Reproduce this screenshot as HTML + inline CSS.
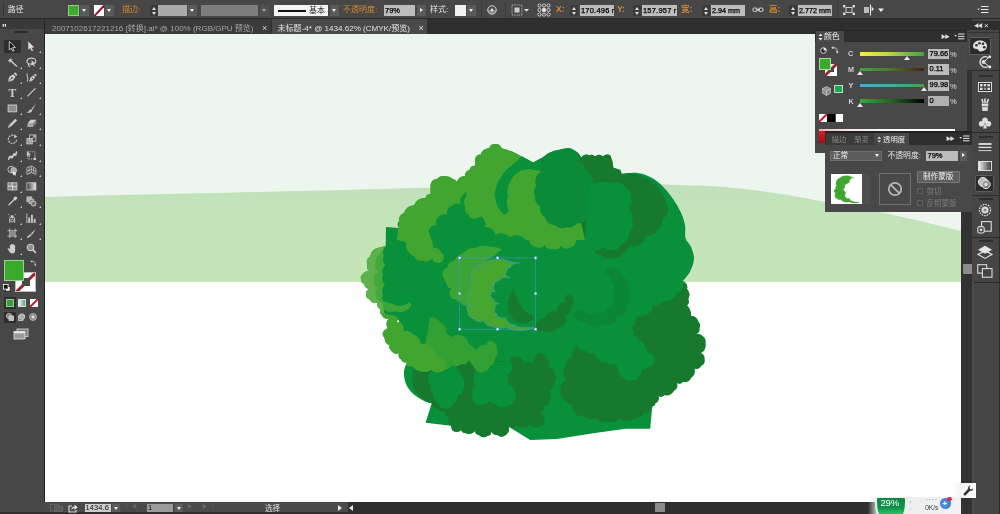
<!DOCTYPE html>
<html lang="zh-CN">
<head>
<meta charset="utf-8">
<title>Illustrator</title>
<style>
html,body{margin:0;padding:0;}
body{width:1000px;height:514px;overflow:hidden;position:relative;background:#454545;font-family:"Liberation Sans","Noto Sans CJK SC",sans-serif;font-size:8px;color:#d8d8d8;line-height:1;}
.a{position:absolute;}
.t{position:absolute;white-space:nowrap;}
#topbar{left:0;top:0;width:1000px;height:18px;background:#474747;}
#tabbar{left:0;top:18px;width:1000px;height:16px;background:#2f2f2f;}
#toolbar{left:0;top:22px;width:43.5px;height:492px;background:#474747;border-right:1.5px solid #232323;}
#canvas{left:45px;top:34px;width:916px;height:468px;background:#fff;overflow:hidden;}
#status{left:44px;top:502px;width:917px;height:12px;background:#4a4a4a;}
#vscroll{left:961px;top:34px;width:11px;height:480px;background:#323232;}
#dock{left:972px;top:19px;width:28px;height:495px;background:#454545;}
.fld{position:absolute;white-space:nowrap;overflow:hidden;background:#bdbdbd;color:#000;-webkit-text-stroke:0.25px #000;height:11px;top:5px;font-size:7.5px;line-height:11px;}
.org{color:#d98a2f;}
.dd{position:absolute;top:5px;height:11px;width:9px;background:#5a5a5a;}
.dd:after{content:"";position:absolute;left:2px;top:4px;border:2.5px solid transparent;border-top:3px solid #eee;border-bottom:0;}
.sp{position:absolute;top:5px;height:11px;width:8px;background:#3a3a3a;}
.sp:before{content:"";position:absolute;left:1.5px;top:1.5px;border:2.5px solid transparent;border-bottom:3px solid #ddd;border-top:0;}
.sp:after{content:"";position:absolute;left:1.5px;top:6.5px;border:2.5px solid transparent;border-top:3px solid #ddd;border-bottom:0;}
.grip{position:absolute;left:7px;width:14px;height:2px;background:#2e2e2e;}
.sep{position:absolute;left:0;width:28px;height:1px;background:#2c2c2c;}
.pn{position:absolute;background:#484848;}
.dim{color:#8c8c8c;}
</style>
</head>
<body>
<div id="root" class="a" style="left:0;top:0;width:1000px;height:514px;overflow:hidden;will-change:transform;">

<!-- ================= TOP CONTROL BAR ================= -->
<div id="topbar" class="a">
  <div class="a" style="left:3px;top:3px;width:1px;height:13px;background:#333;"></div>
  <div class="t" style="left:8px;top:5.5px;font-size:7.7px;color:#e6e6e6;">路径</div>
  <div class="a" style="left:68px;top:5px;width:9px;height:9px;background:#3faa2b;border:1px solid #8fd07d;"></div>
  <div class="dd" style="left:80px;"></div>
  <div class="a" style="left:94px;top:5px;width:10px;height:11px;background:#fff;overflow:hidden;"><div class="a" style="left:-3px;top:4.5px;width:16px;height:1.9px;background:#93161f;transform:rotate(-47deg);"></div></div>
  <div class="dd" style="left:105px;"></div>
  <div class="t org" style="left:122px;top:5.6px;font-size:8px;">描边:</div>
  <div class="sp" style="left:150px;"></div>
  <div class="fld" style="left:158px;width:29px;background:#a9a9a9;"></div>
  <div class="dd" style="left:188px;"></div>
  <div class="fld" style="left:201px;width:57px;background:#7d7d7d;"></div>
  <div class="dd" style="left:260px;opacity:.55;"></div>
  <div class="a" style="left:274px;top:5px;width:54px;height:11px;background:#f4f4f4;">
    <div class="a" style="left:4px;top:5px;width:28px;height:2px;background:#111;"></div>
    <div class="t" style="left:35px;top:1.5px;font-size:8px;color:#222;">基本</div>
  </div>
  <div class="dd" style="left:330px;"></div>
  <div class="t org" style="left:343px;top:5.6px;font-size:8px;">不透明度:</div>
  <div class="fld" style="left:384px;width:31px;padding-left:1px;box-sizing:border-box;">79%</div>
  <div class="a" style="left:417px;top:5px;width:9px;height:11px;background:#5a5a5a;"><i class="a" style="left:3px;top:3px;border:2.5px solid transparent;border-left:3.5px solid #eee;border-right:0;"></i></div>
  <div class="t" style="left:430px;top:5.6px;font-size:8px;color:#e6e6e6;">样式:</div>
  <div class="a" style="left:455px;top:5px;width:11px;height:11px;background:#f2f2f2;"></div>
  <div class="dd" style="left:467px;"></div>
  <div class="a" style="left:481px;top:2px;width:1px;height:15px;background:#3a3a3a;"></div>
  <!-- globe / recolor -->
  <svg class="a" style="left:486px;top:4px" width="12" height="12" viewBox="0 0 12 12"><circle cx="6" cy="6" r="4.3" fill="#8a8a8a" stroke="#c4c4c4" stroke-width="1"/><path d="M2.6,6 A3.4,3.4 0 0 1 9.4,6 Z" fill="#4a4a4a"/><circle cx="6" cy="6" r="1.4" fill="#ddd"/></svg>
  <div class="a" style="left:505px;top:2px;width:1px;height:15px;background:#3a3a3a;"></div>
  <!-- align icon -->
  <svg class="a" style="left:511px;top:4px" width="20" height="12" viewBox="0 0 20 12"><rect x="1" y="1" width="10" height="10" fill="none" stroke="#cfcfcf" stroke-width="0.8" stroke-dasharray="1.2 1"/><rect x="3.5" y="3.5" width="5" height="5" fill="#cfcfcf"/><path d="M13,5 L18,5 L15.5,7.8 Z" fill="#e6e6e6"/></svg>
  <!-- reference point grid -->
  <svg class="a" style="left:537px;top:3px" width="14" height="14" viewBox="0 0 14 14"><g fill="none" stroke="#dcdcdc" stroke-width="0.9"><circle cx="2.5" cy="2.5" r="1.6"/><circle cx="7" cy="2.5" r="1.6"/><circle cx="11.5" cy="2.5" r="1.6"/><circle cx="2.5" cy="7" r="1.6"/><circle cx="11.5" cy="7" r="1.6"/><circle cx="2.5" cy="11.5" r="1.6"/><circle cx="7" cy="11.5" r="1.6"/><circle cx="11.5" cy="11.5" r="1.6"/></g><rect x="5.2" y="5.2" width="3.6" height="3.6" fill="#eee"/></svg>
  <div class="t org" style="left:556px;top:5px;font-size:8.5px;font-weight:bold;">X:</div>
  <div class="sp" style="left:570px;"></div>
  <div class="fld" style="left:580px;width:34px;padding-left:1px;box-sizing:border-box;letter-spacing:0.2px;">170.496 r</div>
  <div class="t org" style="left:617px;top:5px;font-size:8.5px;font-weight:bold;">Y:</div>
  <div class="sp" style="left:633px;"></div>
  <div class="fld" style="left:642px;width:35px;padding-left:1px;box-sizing:border-box;letter-spacing:0.2px;">157.957 r</div>
  <div class="t org" style="left:681px;top:5.4px;font-size:8.5px;font-weight:bold;">宽:</div>
  <div class="sp" style="left:702px;"></div>
  <div class="fld" style="left:711px;width:34px;padding-left:1px;box-sizing:border-box;font-size:7.2px;">2.94 mm</div>
  <svg class="a" style="left:752px;top:5px" width="12" height="10" viewBox="0 0 12 10"><g fill="none" stroke="#ddd" stroke-width="1"><rect x="0.8" y="3" width="4.6" height="3.4" rx="1.6"/><rect x="6.6" y="3" width="4.6" height="3.4" rx="1.6"/></g><path d="M4,4.7 L8,4.7" stroke="#ddd" stroke-width="1"/></svg>
  <div class="t org" style="left:769px;top:5.4px;font-size:8.5px;font-weight:bold;">高:</div>
  <div class="sp" style="left:789px;"></div>
  <div class="fld" style="left:798px;width:34px;padding-left:1px;box-sizing:border-box;font-size:7.2px;">2.772 mm</div>
  <div class="a" style="left:837px;top:2px;width:1px;height:15px;background:#3a3a3a;"></div>
  <svg class="a" style="left:842px;top:4px" width="14" height="12" viewBox="0 0 14 12"><rect x="4" y="3.5" width="6" height="5" fill="none" stroke="#ddd" stroke-width="0.9"/><g fill="#ddd"><rect x="1" y="1" width="2.4" height="2.4"/><rect x="10.6" y="1" width="2.4" height="2.4"/><rect x="1" y="8.6" width="2.4" height="2.4"/><rect x="10.6" y="8.6" width="2.4" height="2.4"/></g></svg>
  <svg class="a" style="left:863px;top:4px" width="24" height="12" viewBox="0 0 24 12"><rect x="1" y="3" width="5" height="6" fill="#bbb"/><path d="M7.5,0.5 L7.5,11.5" stroke="#eee" stroke-width="1"/><path d="M8.6,2.5 L11,5 L8.6,7.5 Z" fill="#ddd"/><path d="M15,4.6 L21,4.6 L18,8 Z" fill="#eee"/></svg>
  <svg class="a" style="left:977px;top:5px" width="12" height="10" viewBox="0 0 12 10"><path d="M0.5,3.6 L2.8,3.6 L1.65,5.2 Z" fill="#e8e8e8"/><path d="M4,1.5 L11.5,1.5 M4,4.5 L11.5,4.5 M4,7.5 L11.5,7.5" stroke="#e8e8e8" stroke-width="1.1"/></svg>
</div>

<!-- ================= TAB BAR ================= -->
<div id="tabbar" class="a">
  
  <div class="a" style="left:0;top:0;width:1000px;height:1px;background:#2a2a2a;"></div>
  <div class="a" style="left:45px;top:1px;width:226px;height:15px;background:#3b3b3b;"></div>
  <div class="t dim" style="left:52px;top:6.5px;font-size:8.03px;color:#a6a6a6;">2007102617221216 [转换].ai* @ 100% (RGB/GPU 预览)</div>
  <div class="t" style="left:262px;top:5.5px;font-size:9px;color:#cfcfcf;">×</div>
  <div class="a" style="left:271.5px;top:1px;width:155px;height:15px;background:#4a4a4a;"></div>
  <div class="t" style="left:277.5px;top:6.5px;font-size:8.05px;color:#e2e2e2;">未标题-4* @ 1434.62% (CMYK/预览)</div>
  <div class="t" style="left:418.5px;top:5.5px;font-size:9px;color:#e2e2e2;">×</div>
</div>

<!-- ================= CANVAS ================= -->
<div id="canvas" class="a"><svg class="a" style="left:0;top:0" width="916" height="466" viewBox="45 34 916 466">
<rect x="45" y="34" width="916" height="466" fill="#ecf5ee"/>
<defs><linearGradient id="hg" x1="0" y1="183" x2="0" y2="282" gradientUnits="userSpaceOnUse"><stop offset="0" stop-color="#c1e1bb"/><stop offset="1" stop-color="#c6e6b7"/></linearGradient></defs>
<path d="M45.0,197.0 C70.8,196.4 144.2,194.6 200.0,193.3 C255.8,192.0 326.7,190.4 380.0,189.0 C433.3,187.6 483.3,185.6 520.0,184.6 C556.7,183.6 576.2,183.2 600.0,183.2 C623.8,183.2 641.7,183.8 663.0,184.5 C684.3,185.2 708.7,185.6 728.0,187.2 C747.3,188.8 763.2,191.4 779.0,193.8 C794.8,196.2 802.8,197.7 823.0,201.5 C843.2,205.3 877.0,211.6 900.0,216.5 C923.0,221.4 950.8,228.6 961.0,231.0 L961,282 L45,282 Z" fill="url(#hg)"/>
<rect x="45" y="282" width="916" height="218" fill="#ffffff"/>
<clipPath id="sil"><path d="M385.7,246.0L386.0,227.0L399.0,228.0A5.5,5.5 0 0 1 399.0,221.0A7.4,7.4 0 0 1 404.0,213.0A9.8,9.8 0 0 1 414.0,205.5A10.7,10.7 0 0 1 425.5,198.0A5.1,5.1 0 0 1 430.6,194.0L430.6,185.0A6.8,6.8 0 0 1 437.0,179.0A8.7,8.7 0 0 1 443.0,176.0A13.6,13.6 0 0 1 453.0,179.0A6.5,6.5 0 0 1 457.0,182.0A7.8,7.8 0 0 1 465.0,176.0A5.9,5.9 0 0 1 469.5,170.0A5.4,5.4 0 0 1 475.0,165.7L475.0,159.5A6.1,6.1 0 0 1 481.0,154.4A8.0,8.0 0 0 1 489.3,148.3A5.1,5.1 0 0 1 494.4,144.2A6.5,6.5 0 0 1 501.6,148.3C503.7,149.0 510.5,151.0 513.9,152.4C517.3,153.8 518.8,154.8 522.0,156.5C525.2,158.2 531.4,161.6 533.3,162.6L542.5,157.5C543.6,156.8 546.6,154.2 549.0,153.0C551.4,151.8 553.5,151.1 556.8,150.3C560.1,149.5 565.6,148.0 569.0,148.3C572.4,148.7 575.2,150.9 577.3,152.4C579.3,153.9 580.6,156.7 581.3,157.5A6.6,6.6 0 0 1 589.5,155.4A4.4,4.4 0 0 1 595.0,156.5A6.2,6.2 0 0 1 603.0,156.5A5.8,5.8 0 0 1 610.3,155.4L612.4,161.6L613.4,167.7L620.5,169.8L621.6,173.9C624.0,173.7 631.6,172.5 636.0,172.8C640.4,173.2 643.9,174.1 648.0,176.0C652.1,177.9 656.3,180.3 660.4,184.0C664.5,187.7 669.3,193.6 672.7,198.4C676.1,203.2 679.0,208.3 681.0,212.7C683.0,217.1 684.2,220.8 685.0,225.0C685.8,229.2 684.5,234.3 685.5,238.0C686.5,241.7 689.6,243.6 691.0,247.0C692.4,250.4 694.1,254.4 694.0,258.4C693.9,262.3 692.3,266.9 690.5,270.7C688.7,274.5 684.2,279.3 683.0,281.0A7.0,7.0 0 0 1 687.0,289.0A8.1,8.1 0 0 1 688.0,299.3A4.8,4.8 0 0 1 687.0,305.4A14.4,14.4 0 0 1 691.0,315.7A7.4,7.4 0 0 1 698.3,321.8A4.9,4.9 0 0 1 699.3,328.0A5.3,5.3 0 0 1 696.2,334.0A8.7,8.7 0 0 1 705.4,340.2L705.4,345.0A7.4,7.4 0 0 1 700.3,353.0A5.9,5.9 0 0 1 704.4,359.3A5.3,5.3 0 0 1 701.3,365.4A6.0,6.0 0 0 1 694.2,368.5A7.6,7.6 0 0 1 691.0,377.7A7.0,7.0 0 0 1 683.0,381.8A4.9,4.9 0 0 1 676.8,382.8A6.8,6.8 0 0 1 673.7,391.0A7.8,7.8 0 0 1 664.5,395.0A4.8,4.8 0 0 1 658.4,396.0A6.2,6.2 0 0 1 655.3,403.3A3.3,3.3 0 0 1 652.3,406.3L650.2,428.8L625.7,428.8L595.0,433.0L556.8,439.0L530.2,440.0L508.7,426.8A6.8,6.8 0 0 1 505.7,435.0A6.4,6.4 0 0 1 497.5,435.0A5.7,5.7 0 0 1 491.4,431.0A5.0,5.0 0 0 1 487.3,436.0A6.5,6.5 0 0 1 479.0,435.0A4.4,4.4 0 0 1 475.0,431.0A7.6,7.6 0 0 1 465.4,433.0A4.0,4.0 0 0 1 461.3,430.0A7.3,7.3 0 0 1 452.0,430.0L451.0,425.8L425.6,422.7L431.7,403.3C430.5,402.9 427.6,402.8 424.5,401.2C421.4,399.6 416.4,396.9 413.3,394.0C410.2,391.1 407.6,387.6 406.0,383.9C404.4,380.2 403.8,375.2 404.0,371.6C404.2,368.0 406.5,363.9 407.0,362.4A5.3,5.3 0 0 1 401.0,359.3A5.0,5.0 0 0 1 399.0,353.2A6.9,6.9 0 0 1 390.8,350.0A4.0,4.0 0 0 1 389.8,345.0A6.8,6.8 0 0 1 384.7,338.0A5.5,5.5 0 0 1 383.6,331.0L387.7,328.0A7.3,7.3 0 0 1 388.7,318.7A6.4,6.4 0 0 1 381.6,314.6A4.1,4.1 0 0 1 380.6,309.5A6.0,6.0 0 0 1 377.5,302.4A6.8,6.8 0 0 1 369.3,299.3A4.7,4.7 0 0 1 366.2,294.2A4.7,4.7 0 0 1 369.3,289.0A5.6,5.6 0 0 1 364.2,284.0A4.7,4.7 0 0 1 361.0,278.9A3.3,3.3 0 0 1 362.2,274.8A6.8,6.8 0 0 1 370.3,271.7A6.1,6.1 0 0 1 367.3,264.5A6.7,6.7 0 0 1 370.3,256.4A8.6,8.6 0 0 1 377.5,248.0L385.7,246.0Z"/></clipPath>
<g clip-path="url(#sil)">
<rect x="350" y="130" width="370" height="320" fill="#08903a"/>
<path d="M386.0,244.0A7.3,7.3 0 0 0 377.5,248.0A8.6,8.6 0 0 0 370.3,256.4A6.7,6.7 0 0 0 367.3,264.5A6.1,6.1 0 0 0 370.3,271.7A6.8,6.8 0 0 0 362.2,274.8A3.3,3.3 0 0 0 361.0,278.9A4.7,4.7 0 0 0 364.2,284.0A5.6,5.6 0 0 0 369.3,289.0A4.7,4.7 0 0 0 366.2,294.2A4.7,4.7 0 0 0 369.3,299.3A6.8,6.8 0 0 0 377.5,302.4A6.0,6.0 0 0 0 380.6,309.5A5.1,5.1 0 0 0 381.6,316.0L386.0,316.0L386.0,244.0Z" fill="#5fb24b"/>
<path d="M386.0,250.0A5.6,5.6 0 0 0 380.0,254.0A7.0,7.0 0 0 0 376.0,262.0A8.0,8.0 0 0 0 378.0,272.0A7.0,7.0 0 0 0 374.0,280.0A7.0,7.0 0 0 0 378.0,288.0A6.4,6.4 0 0 0 376.0,296.0A6.6,6.6 0 0 0 382.0,302.0L386.0,306.0L386.0,250.0Z" fill="#45a83a"/>
<path d="M390.0,244.0L386.0,246.0A8.0,8.0 0 0 0 383.8,256.0A7.1,7.1 0 0 0 385.5,265.0A8.0,8.0 0 0 0 383.0,275.0A8.0,8.0 0 0 0 385.0,285.0A7.9,7.9 0 0 0 383.2,295.0A7.9,7.9 0 0 0 385.0,305.0A7.8,7.8 0 0 0 386.0,315.0L390.0,315.0L390.0,244.0Z" fill="#08903a"/>
<path d="M381.6,299.3A14.3,14.3 0 0 0 391.8,303.4A13.5,13.5 0 0 0 402.0,305.4A11.9,11.9 0 0 0 410.2,301.3L411.2,305.4A9.5,9.5 0 0 1 406.0,310.5A13.1,13.1 0 0 1 396.0,311.6A16.3,16.3 0 0 1 383.6,309.5L381.6,299.3Z" fill="#3da536"/>
<path d="M392.0,245.0L392.0,200.0L425.0,170.0L465.0,150.0L492.0,136.0L526.0,150.0L523.0,157.0L560.0,160.0L590.0,200.0L590.0,240.0L576.0,240.0A8.3,8.3 0 0 1 569.0,248.0A6.4,6.4 0 0 1 561.0,246.0A6.9,6.9 0 0 1 552.7,249.0A7.1,7.1 0 0 1 544.5,245.0A6.6,6.6 0 0 1 536.3,247.0A7.9,7.9 0 0 1 529.0,240.0L526.0,240.0A12.9,12.9 0 0 0 509.8,237.0A11.3,11.3 0 0 0 495.4,235.0A10.2,10.2 0 0 0 485.0,227.0A8.5,8.5 0 0 0 481.0,216.8L475.0,218.8A6.0,6.0 0 0 1 468.5,214.8A6.8,6.8 0 0 1 465.4,206.6A8.1,8.1 0 0 1 466.5,196.3A5.3,5.3 0 0 1 469.5,190.2L463.4,194.3A8.1,8.1 0 0 0 461.3,204.5A8.2,8.2 0 0 0 451.0,206.6A7.1,7.1 0 0 0 447.0,214.8A6.6,6.6 0 0 0 438.8,216.8A6.6,6.6 0 0 0 436.8,225.0A7.9,7.9 0 0 0 428.6,231.0L431.7,240.0L433.7,248.2A6.5,6.5 0 0 1 441.0,252.3A6.5,6.5 0 0 1 443.0,260.4A5.1,5.1 0 0 1 436.8,262.5A4.5,4.5 0 0 1 432.7,258.4A8.1,8.1 0 0 1 422.5,260.4A7.1,7.1 0 0 1 414.3,256.4A13.0,13.0 0 0 1 406.0,242.0L397.0,240.0L399.0,221.0L392.0,215.0L392.0,245.0Z" fill="#42a52f"/>
<path d="M522.0,156.0L546.0,158.0L546.0,172.0L534.0,170.0A11.7,11.7 0 0 0 525.0,170.0A12.8,12.8 0 0 0 516.0,174.0A10.2,10.2 0 0 0 511.0,180.0A21.2,21.2 0 0 0 508.0,196.0A19.5,19.5 0 0 0 509.0,211.0L504.0,215.0L497.5,207.0L494.4,194.0L497.5,182.0L506.0,170.0L516.0,162.0L522.0,156.0Z" fill="#08903a"/>
<path d="M576.0,150.0L615.0,150.0L615.0,168.0L623.0,172.0C624.8,172.2 630.3,172.6 634.0,173.5C637.7,174.4 641.5,175.6 645.0,177.5C648.5,179.4 652.0,182.1 655.0,185.0C658.0,187.9 661.0,191.8 663.0,195.0C665.0,198.2 666.2,201.7 667.0,204.0C667.8,206.3 667.8,208.2 668.0,209.0A9.1,9.1 0 0 1 662.0,219.0A9.4,9.4 0 0 1 657.0,230.0A10.5,10.5 0 0 1 645.0,236.0A7.4,7.4 0 0 1 640.0,244.0A8.6,8.6 0 0 1 629.0,245.0A7.8,7.8 0 0 1 623.0,253.0A8.7,8.7 0 0 1 613.0,258.0A9.6,9.6 0 0 1 601.0,255.0A8.3,8.3 0 0 1 593.0,248.0L585.0,240.0L576.0,200.0L576.0,150.0Z" fill="#17792e"/>
<path d="M542.0,158.0L548.0,140.0L580.0,140.0L583.0,157.0L576.0,161.0A10.4,10.4 0 0 1 585.4,170.5A11.4,11.4 0 0 1 593.0,183.0A11.2,11.2 0 0 1 590.0,197.0A11.2,11.2 0 0 1 587.0,211.0A11.0,11.0 0 0 1 588.5,225.0L586.5,218.8A7.9,7.9 0 0 1 577.3,223.0A8.6,8.6 0 0 1 567.0,227.0A9.6,9.6 0 0 1 554.8,225.0A10.3,10.3 0 0 1 544.5,216.8A8.6,8.6 0 0 1 540.4,206.6A9.0,9.0 0 0 1 535.3,196.3A8.1,8.1 0 0 1 536.3,186.0A11.5,11.5 0 0 1 540.4,171.8L542.0,158.0Z" fill="#0b8b38"/>
<path d="M590.0,184.0A26.0,26.0 0 0 1 610.0,183.0A13.1,13.1 0 0 1 626.0,188.0A8.0,8.0 0 0 1 631.0,197.0A8.9,8.9 0 0 1 628.0,208.0A9.9,9.9 0 0 1 632.0,220.0A10.4,10.4 0 0 1 629.0,233.0A10.6,10.6 0 0 1 621.0,244.0A7.8,7.8 0 0 1 613.0,250.0A8.1,8.1 0 0 1 603.0,247.0A6.7,6.7 0 0 1 595.0,250.0L585.0,240.0L587.0,211.0L590.0,184.0Z" fill="#08903a"/>
<path d="M608.0,267.5A12.8,12.8 0 0 1 622.0,276.0A12.0,12.0 0 0 1 628.5,290.0A11.7,11.7 0 0 1 627.5,305.0A12.5,12.5 0 0 1 617.8,317.8A12.7,12.7 0 0 1 602.8,324.2A13.4,13.4 0 0 1 585.7,322.0A12.5,12.5 0 0 1 572.8,312.4L581.4,309.2A12.2,12.2 0 0 0 596.4,313.5A10.5,10.5 0 0 0 608.2,307.0A10.8,10.8 0 0 0 613.5,294.2A10.1,10.1 0 0 0 611.4,281.4A8.8,8.8 0 0 0 604.0,272.8L608.0,267.5Z" fill="#0b8637"/>
<path d="M683.0,284.0A8.4,8.4 0 0 1 677.0,293.0A12.9,12.9 0 0 1 662.5,301.0A8.8,8.8 0 0 1 652.0,305.0A5.4,5.4 0 0 1 650.0,311.6A5.2,5.2 0 0 1 644.0,314.6A6.3,6.3 0 0 1 636.0,315.7A5.0,5.0 0 0 1 635.0,322.0A5.6,5.6 0 0 1 631.0,328.0A6.4,6.4 0 0 1 633.0,336.0A5.6,5.6 0 0 1 639.0,340.0A5.5,5.5 0 0 1 644.0,345.0A6.4,6.4 0 0 1 646.0,353.0A5.7,5.7 0 0 1 653.0,355.0A4.7,4.7 0 0 1 654.0,361.0A6.9,6.9 0 0 1 648.0,367.5A5.7,5.7 0 0 1 641.0,369.5A5.1,5.1 0 0 1 639.0,375.7A6.4,6.4 0 0 1 632.0,380.0A6.8,6.8 0 0 1 623.6,377.7A7.5,7.5 0 0 1 618.5,369.5A4.8,4.8 0 0 1 617.5,363.4A8.2,8.2 0 0 1 607.0,362.4A6.7,6.7 0 0 1 599.0,359.3A5.8,5.8 0 0 1 595.0,353.0A7.2,7.2 0 0 1 586.0,351.0A8.4,8.4 0 0 1 577.0,345.0A9.9,9.9 0 0 0 573.0,357.0A10.3,10.3 0 0 0 565.0,367.5A9.8,9.8 0 0 0 566.0,380.0A8.7,8.7 0 0 0 561.0,390.0A6.4,6.4 0 0 0 563.0,398.0A9.1,9.1 0 0 0 573.0,404.0A6.8,6.8 0 0 0 575.0,412.5A6.7,6.7 0 0 0 583.0,415.6A9.5,9.5 0 0 0 595.0,418.0A9.6,9.6 0 0 0 607.0,420.7A9.9,9.9 0 0 0 619.5,418.6A12.9,12.9 0 0 0 636.0,417.6A7.4,7.4 0 0 0 644.0,412.5A6.5,6.5 0 0 0 651.0,408.0L720.0,400.0L720.0,284.0L683.0,284.0Z" fill="#17792e"/>
<path d="M413.0,371.0L430.0,362.0L480.0,360.0L509.8,361.4A6.3,6.3 0 0 1 516.0,356.2A8.4,8.4 0 0 1 524.0,363.4A8.1,8.1 0 0 1 534.3,364.4A7.3,7.3 0 0 1 536.3,355.2A5.1,5.1 0 0 1 542.5,353.2A5.7,5.7 0 0 1 546.6,359.3A6.6,6.6 0 0 1 548.6,367.5A6.8,6.8 0 0 1 554.8,373.6A8.1,8.1 0 0 1 553.7,383.9A6.2,6.2 0 0 1 548.6,390.0A8.0,8.0 0 0 1 549.6,400.2A6.2,6.2 0 0 1 544.5,406.3A5.8,5.8 0 0 1 540.4,412.5A8.6,8.6 0 0 1 544.5,422.7L542.5,425.8A9.6,9.6 0 0 1 530.2,424.8A11.1,11.1 0 0 1 516.0,425.8A5.7,5.7 0 0 1 508.7,426.8L505.0,445.0L452.0,445.0L451.0,425.8A7.3,7.3 0 0 1 449.0,416.6A5.8,5.8 0 0 1 445.0,410.4A6.6,6.6 0 0 1 436.8,408.4A5.6,5.6 0 0 1 431.7,403.3A10.8,10.8 0 0 1 424.5,399.2A14.2,14.2 0 0 1 416.3,392.0A14.2,14.2 0 0 1 412.3,381.8L413.0,371.0Z" fill="#17792e"/>
<path d="M430.6,371.6A11.2,11.2 0 0 0 431.0,386.0A6.6,6.6 0 0 0 433.7,394.0A9.0,9.0 0 0 0 438.8,404.3A7.2,7.2 0 0 0 447.0,408.4A5.7,5.7 0 0 0 453.0,404.3A7.2,7.2 0 0 0 457.0,396.0A8.0,8.0 0 0 0 463.4,388.0A8.1,8.1 0 0 0 462.4,377.7A6.4,6.4 0 0 0 457.0,371.6L457.0,362.0L431.0,362.0L430.6,371.6Z" fill="#08903a"/>
<path d="M478.0,362.0L509.8,361.4A8.0,8.0 0 0 1 510.8,371.6A5.1,5.1 0 0 1 505.7,375.7A6.6,6.6 0 0 1 507.7,383.9A8.5,8.5 0 0 1 514.9,392.0A6.4,6.4 0 0 1 513.9,400.2A8.0,8.0 0 0 1 505.7,406.3A8.2,8.2 0 0 1 495.4,404.3A5.1,5.1 0 0 1 490.3,400.2A6.4,6.4 0 0 1 483.0,404.0A5.5,5.5 0 0 1 476.0,404.0A7.4,7.4 0 0 1 473.0,395.0A8.1,8.1 0 0 1 476.0,385.0A8.0,8.0 0 0 1 474.0,375.0A6.3,6.3 0 0 1 478.0,368.0L478.0,362.0Z" fill="#08903a"/>
<path d="M430.0,318.0A8.4,8.4 0 0 1 440.0,322.0A9.8,9.8 0 0 1 446.0,333.0L452.0,337.0A7.8,7.8 0 0 1 462.0,336.0A7.2,7.2 0 0 1 468.0,343.0L477.0,350.0A8.0,8.0 0 0 1 486.0,345.0A5.6,5.6 0 0 1 492.0,341.0A8.0,8.0 0 0 1 497.0,350.0A6.4,6.4 0 0 1 495.0,358.0A7.4,7.4 0 0 1 490.0,366.0A7.2,7.2 0 0 1 483.0,372.0A6.7,6.7 0 0 1 475.0,369.0L469.0,360.0A7.0,7.0 0 0 1 461.0,364.0A7.8,7.8 0 0 1 451.0,365.0A5.9,5.9 0 0 1 445.0,369.5A6.3,6.3 0 0 1 437.0,370.6A5.3,5.3 0 0 1 431.0,367.5A7.4,7.4 0 0 1 422.5,371.6A6.0,6.0 0 0 1 416.0,367.5L410.0,360.0L425.0,345.0L428.0,330.0L430.0,318.0Z" fill="#33a034"/>
<path d="M375.0,311.0L389.7,314.8A9.3,9.3 0 0 1 399.7,321.4A8.1,8.1 0 0 1 403.0,331.3A8.2,8.2 0 0 1 413.0,334.6A10.0,10.0 0 0 1 421.0,344.6A7.9,7.9 0 0 1 431.0,346.0A8.7,8.7 0 0 1 436.0,356.0A10.2,10.2 0 0 1 446.0,364.4A5.8,5.8 0 0 1 442.7,371.0A9.2,9.2 0 0 1 431.0,369.4A7.9,7.9 0 0 1 421.0,371.0A7.4,7.4 0 0 1 413.0,366.0A7.4,7.4 0 0 1 404.0,363.0L395.0,362.0L375.0,345.0L375.0,311.0Z" fill="#42a52f"/>
<path d="M442.5,275.7A7.9,7.9 0 0 1 447.8,267.0A7.1,7.1 0 0 1 454.3,260.7A14.7,14.7 0 0 1 462.8,253.2A18.2,18.2 0 0 1 475.7,247.8A19.5,19.5 0 0 1 490.7,246.8A15.8,15.8 0 0 1 502.4,250.0A11.8,11.8 0 0 0 495.0,255.3L484.0,262.0L484.0,320.7A8.4,8.4 0 0 1 473.5,318.5A6.6,6.6 0 0 1 468.0,312.0A5.0,5.0 0 0 1 467.0,305.7A5.9,5.9 0 0 1 460.7,301.4A4.5,4.5 0 0 1 455.3,299.2A5.3,5.3 0 0 1 450.0,295.0A5.3,5.3 0 0 1 452.0,288.5A5.2,5.2 0 0 1 446.8,284.3L442.5,275.7Z" fill="#3ba434"/>
<path d="M514.2,289.6A14.3,14.3 0 0 0 508.9,299.2A11.3,11.3 0 0 0 507.8,307.8A13.6,13.6 0 0 0 512.0,317.4A13.2,13.2 0 0 0 520.6,322.8A11.3,11.3 0 0 0 529.2,321.7A8.9,8.9 0 0 0 533.5,316.4A9.8,9.8 0 0 1 527.0,312.6A12.6,12.6 0 0 1 521.0,305.0A10.7,10.7 0 0 1 517.6,297.5A11.2,11.2 0 0 1 514.2,289.6Z" fill="#17792e"/>
<path d="M534.3,330.0A12.5,12.5 0 0 1 544.5,317.7A10.7,10.7 0 0 1 556.8,311.6A10.3,10.3 0 0 1 565.0,301.3A6.0,6.0 0 0 1 568.0,294.2A5.6,5.6 0 0 1 573.0,299.3A6.6,6.6 0 0 1 571.0,307.5A7.9,7.9 0 0 1 565.0,315.7A6.3,6.3 0 0 1 565.0,323.8A7.2,7.2 0 0 1 556.8,328.0A8.5,8.5 0 0 1 546.6,332.0L534.3,330.0Z" fill="#17792e"/>
<path d="M484.2,262.8A14.6,14.6 0 0 1 495.0,259.6A19.7,19.7 0 0 1 510.0,261.8L520.6,262.8A14.8,14.8 0 0 0 510.0,267.0A11.4,11.4 0 0 0 505.7,274.6L508.9,277.8A8.0,8.0 0 0 0 499.2,281.0A5.3,5.3 0 0 0 493.9,285.3A5.3,5.3 0 0 0 496.0,291.7A4.5,4.5 0 0 0 490.7,293.9A4.8,4.8 0 0 0 493.9,299.2A4.7,4.7 0 0 0 498.2,303.5A4.9,4.9 0 0 0 495.0,308.9A4.2,4.2 0 0 0 496.0,314.2A8.0,8.0 0 0 0 505.7,317.4A8.8,8.8 0 0 0 514.2,324.9A16.9,16.9 0 0 0 527.0,327.0L533.5,328.0A36.1,36.1 0 0 1 505.7,327.5A19.6,19.6 0 0 1 490.7,326.0A6.5,6.5 0 0 1 484.2,320.7A8.5,8.5 0 0 1 473.5,318.5A6.5,6.5 0 0 1 468.2,312.0A6.0,6.0 0 0 1 470.3,304.6A5.4,5.4 0 0 1 466.0,299.2A6.0,6.0 0 0 1 470.3,292.8A6.1,6.1 0 0 1 472.5,285.3A5.9,5.9 0 0 1 471.4,277.8A6.4,6.4 0 0 1 474.6,270.3A4.7,4.7 0 0 1 478.9,266.0L484.2,262.8Z" fill="#45a730" stroke="#4a98d6" stroke-width="0.6" stroke-opacity="0.75"/>
</g>
<rect x="459.6" y="257.9" width="76" height="71.3" fill="none" stroke="#4a98d6" stroke-width="0.6" stroke-opacity="0.9"/>
<rect x="458.4" y="256.7" width="2.4" height="2.4" fill="#fff" stroke="#3f8fd0" stroke-width="0.5"/>
<rect x="458.4" y="292.3" width="2.4" height="2.4" fill="#fff" stroke="#3f8fd0" stroke-width="0.5"/>
<rect x="458.4" y="328.0" width="2.4" height="2.4" fill="#fff" stroke="#3f8fd0" stroke-width="0.5"/>
<rect x="496.4" y="256.7" width="2.4" height="2.4" fill="#fff" stroke="#3f8fd0" stroke-width="0.5"/>
<rect x="496.4" y="328.0" width="2.4" height="2.4" fill="#fff" stroke="#3f8fd0" stroke-width="0.5"/>
<rect x="534.4" y="256.7" width="2.4" height="2.4" fill="#fff" stroke="#3f8fd0" stroke-width="0.5"/>
<rect x="534.4" y="292.3" width="2.4" height="2.4" fill="#fff" stroke="#3f8fd0" stroke-width="0.5"/>
<rect x="534.4" y="328.0" width="2.4" height="2.4" fill="#fff" stroke="#3f8fd0" stroke-width="0.5"/>
<rect x="483.4" y="262.0" width="1.6" height="1.6" fill="#4a98d6" fill-opacity="0.85"/>
<rect x="509.2" y="261.0" width="1.6" height="1.6" fill="#4a98d6" fill-opacity="0.85"/>
<rect x="509.2" y="266.2" width="1.6" height="1.6" fill="#4a98d6" fill-opacity="0.85"/>
<rect x="508.1" y="277.0" width="1.6" height="1.6" fill="#4a98d6" fill-opacity="0.85"/>
<rect x="493.1" y="284.5" width="1.6" height="1.6" fill="#4a98d6" fill-opacity="0.85"/>
<rect x="489.9" y="293.1" width="1.6" height="1.6" fill="#4a98d6" fill-opacity="0.85"/>
<rect x="497.4" y="302.7" width="1.6" height="1.6" fill="#4a98d6" fill-opacity="0.85"/>
<rect x="495.2" y="313.4" width="1.6" height="1.6" fill="#4a98d6" fill-opacity="0.85"/>
<rect x="513.4" y="324.1" width="1.6" height="1.6" fill="#4a98d6" fill-opacity="0.85"/>
<rect x="532.7" y="327.2" width="1.6" height="1.6" fill="#4a98d6" fill-opacity="0.85"/>
<rect x="489.9" y="325.2" width="1.6" height="1.6" fill="#4a98d6" fill-opacity="0.85"/>
<rect x="472.7" y="317.7" width="1.6" height="1.6" fill="#4a98d6" fill-opacity="0.85"/>
<rect x="469.5" y="303.8" width="1.6" height="1.6" fill="#4a98d6" fill-opacity="0.85"/>
<rect x="469.5" y="292.0" width="1.6" height="1.6" fill="#4a98d6" fill-opacity="0.85"/>
<rect x="470.6" y="277.0" width="1.6" height="1.6" fill="#4a98d6" fill-opacity="0.85"/>
<rect x="478.1" y="265.2" width="1.6" height="1.6" fill="#4a98d6" fill-opacity="0.85"/>
<rect x="397.2" y="320.4" width="1.8" height="1.8" fill="#f4fff4"/>
</svg></div>

<!-- ================= LEFT TOOLBAR ================= -->
<div id="toolbar" class="a">
  <div class="a" style="left:0;top:-3px;width:44px;height:10px;background:#393939;"></div>
  <div class="t" style="left:2px;top:2px;font-size:10px;font-weight:bold;color:#e8e8e8;letter-spacing:-1px;">"</div>
  <div class="a" style="left:14px;top:8.6px;width:13.5px;height:2px;background:#2c2c2c;"></div>
  <div class="a" style="left:0;top:489.5px;width:44px;height:2.5px;background:#303030;"></div>
  <div class="a" style="left:3.5px;top:17.5px;width:17px;height:13.5px;background:#2d2d2d;border-radius:1.5px;"></div>
<svg class="a" style="left:7.1px;top:19.1px" width="10.8" height="10.8" viewBox="0 0 12 12"><path d="M2.5,0.5 L2.5,10 L4.8,7.9 L6.4,11.4 L7.9,10.7 L6.2,7.3 L9.3,7.1 Z" fill="#111" stroke="#e8e8e8" stroke-width="0.9"/></svg>
<svg class="a" style="left:26.1px;top:19.1px" width="10.8" height="10.8" viewBox="0 0 12 12"><path d="M2.5,0.5 L2.5,10 L4.8,7.9 L6.4,11.4 L7.9,10.7 L6.2,7.3 L9.3,7.1 Z" fill="#e0e0e0"/></svg>
<div class="a" style="left:38.5px;top:29.0px;width:0;height:0;border-left:2px solid transparent;border-bottom:2px solid #ccc;"></div>
<svg class="a" style="left:7.1px;top:34.6px" width="10.8" height="10.8" viewBox="0 0 12 12"><path d="M4.5,4.5 L11,10.5" stroke="#cdcdcd" stroke-width="1.6"/><path d="M3.5,0.5 L4.3,2.7 L6.6,2.2 L5,3.9 L6.4,5.8 L4.2,5.1 L2.8,7 L2.7,4.6 L0.5,3.8 L2.7,3 Z" fill="#cdcdcd"/></svg>
<svg class="a" style="left:26.1px;top:34.6px" width="10.8" height="10.8" viewBox="0 0 12 12"><ellipse cx="6" cy="4.6" rx="5" ry="3.4" fill="none" stroke="#cdcdcd" stroke-width="1.3"/><path d="M3.2,7 C2,8.5 3,10 4.5,11.2" fill="none" stroke="#cdcdcd" stroke-width="1.2"/><path d="M6.2,3.2 L6.2,9.6 L7.8,8.3 L9,10.8 L10,10.3 L8.9,7.9 L10.8,7.8 Z" fill="#cdcdcd"/></svg>
<div class="a" style="left:19.5px;top:44.5px;width:0;height:0;border-left:2px solid transparent;border-bottom:2px solid #ccc;"></div>
<div class="a" style="left:38.5px;top:44.5px;width:0;height:0;border-left:2px solid transparent;border-bottom:2px solid #ccc;"></div>
<svg class="a" style="left:7.1px;top:50.3px" width="10.8" height="10.8" viewBox="0 0 12 12"><path d="M0.8,11.2 L2.6,5.4 L6.8,2.4 L9.6,5.2 L6.6,9.4 Z" fill="#cdcdcd"/><path d="M7.6,1.8 L9,0.4 L11.6,3 L10.2,4.4 Z" fill="#cdcdcd"/><path d="M0.8,11.2 L5,7" stroke="#474747" stroke-width="0.7"/><circle cx="5.4" cy="6.6" r="1" fill="#474747"/></svg>
<svg class="a" style="left:26.1px;top:50.3px" width="10.8" height="10.8" viewBox="0 0 12 12"><path d="M3.6,11 L4.8,6.4 L8,3.6 L10.2,5.8 L7.6,9.2 Z" fill="#cdcdcd"/><path d="M8.8,3 L10,1.8 L12,3.8 L10.8,5 Z" fill="#cdcdcd"/><circle cx="7.2" cy="7" r="0.8" fill="#474747"/><path d="M1.2,1.5 C0.4,5 3.2,6 1.6,10.5" fill="none" stroke="#cdcdcd" stroke-width="1.1"/></svg>
<div class="a" style="left:19.5px;top:60.2px;width:0;height:0;border-left:2px solid transparent;border-bottom:2px solid #ccc;"></div>
<div class="a" style="left:38.5px;top:60.2px;width:0;height:0;border-left:2px solid transparent;border-bottom:2px solid #ccc;"></div>
<svg class="a" style="left:7.1px;top:65.1px" width="10.8" height="10.8" viewBox="0 0 12 12"><text x="6" y="10.6" text-anchor="middle" font-family="Liberation Serif,serif" font-size="13" font-weight="bold" fill="#cdcdcd">T</text></svg>
<svg class="a" style="left:26.1px;top:65.1px" width="10.8" height="10.8" viewBox="0 0 12 12"><path d="M1.5,10.5 L10.5,1.5" stroke="#cdcdcd" stroke-width="1.3"/></svg>
<div class="a" style="left:19.5px;top:75.0px;width:0;height:0;border-left:2px solid transparent;border-bottom:2px solid #ccc;"></div>
<div class="a" style="left:38.5px;top:75.0px;width:0;height:0;border-left:2px solid transparent;border-bottom:2px solid #ccc;"></div>
<svg class="a" style="left:7.1px;top:80.6px" width="10.8" height="10.8" viewBox="0 0 12 12"><rect x="1.2" y="2.2" width="9.6" height="7.6" fill="#8e8e8e" stroke="#cdcdcd" stroke-width="1"/></svg>
<svg class="a" style="left:26.1px;top:80.6px" width="10.8" height="10.8" viewBox="0 0 12 12"><path d="M11.2,0.6 L6,6.6 L7.2,7.6 Z" fill="#cdcdcd"/><path d="M5.6,7 C3.5,7.2 3.8,9.6 1,10.6 C4,11.4 6.8,10.2 6.9,8 Z" fill="#cdcdcd"/></svg>
<div class="a" style="left:19.5px;top:90.5px;width:0;height:0;border-left:2px solid transparent;border-bottom:2px solid #ccc;"></div>
<div class="a" style="left:38.5px;top:90.5px;width:0;height:0;border-left:2px solid transparent;border-bottom:2px solid #ccc;"></div>
<svg class="a" style="left:7.1px;top:96.3px" width="10.8" height="10.8" viewBox="0 0 12 12"><path d="M9.2,0.8 L11.2,2.8 L4,10 L1,11 L2,8 Z" fill="#cdcdcd"/><path d="M2,8 L4,10" stroke="#474747" stroke-width="0.6"/></svg>
<svg class="a" style="left:26.1px;top:96.3px" width="10.8" height="10.8" viewBox="0 0 12 12"><path d="M5,2 L11.5,2 L8,6.5 L1.5,6.5 Z" fill="#cdcdcd"/><path d="M1.5,6.8 L8,6.8 L8,10 L1.5,10 Z" fill="#aaa"/><path d="M8,6.8 L11.5,2.3 L11.5,5.6 L8,10 Z" fill="#888"/></svg>
<div class="a" style="left:19.5px;top:106.2px;width:0;height:0;border-left:2px solid transparent;border-bottom:2px solid #ccc;"></div>
<div class="a" style="left:38.5px;top:106.2px;width:0;height:0;border-left:2px solid transparent;border-bottom:2px solid #ccc;"></div>
<svg class="a" style="left:7.1px;top:111.9px" width="10.8" height="10.8" viewBox="0 0 12 12"><path d="M9.8,3.2 A4.6,4.6 0 1 0 10.6,6.6" fill="none" stroke="#cdcdcd" stroke-width="1.2" stroke-dasharray="2.2 1"/><path d="M8.2,0.6 L11.4,3 L7.8,4.6 Z" fill="#cdcdcd"/></svg>
<svg class="a" style="left:26.1px;top:111.9px" width="10.8" height="10.8" viewBox="0 0 12 12"><rect x="1" y="5" width="6" height="6" fill="#999" stroke="#cdcdcd" stroke-width="0.9"/><rect x="4" y="1" width="7" height="7" fill="none" stroke="#cdcdcd" stroke-width="0.9"/><path d="M6,6 L10,2 M10,2 L7.6,2.2 M10,2 L9.8,4.4" stroke="#cdcdcd" stroke-width="0.9" fill="none"/></svg>
<div class="a" style="left:19.5px;top:121.8px;width:0;height:0;border-left:2px solid transparent;border-bottom:2px solid #ccc;"></div>
<div class="a" style="left:38.5px;top:121.8px;width:0;height:0;border-left:2px solid transparent;border-bottom:2px solid #ccc;"></div>
<svg class="a" style="left:7.1px;top:127.6px" width="10.8" height="10.8" viewBox="0 0 12 12"><path d="M1,10 C3,3 5,9 6.5,5 C8,1 10,6 11,2 L11,5 C10,8 8,5 7,8 C5.5,11.5 3,7 1,10 Z" fill="#cdcdcd"/><circle cx="2" cy="10" r="1" fill="#cdcdcd"/><circle cx="10.5" cy="2.5" r="1" fill="#cdcdcd"/></svg>
<svg class="a" style="left:26.1px;top:127.6px" width="10.8" height="10.8" viewBox="0 0 12 12"><rect x="2" y="2" width="8" height="8" fill="none" stroke="#cdcdcd" stroke-width="0.9" stroke-dasharray="1.4 1"/><path d="M1,1 L5.5,5.2 L3.6,5.4 L4.6,7.6 L3.8,8 L2.8,5.8 L1,7 Z" fill="#cdcdcd"/><rect x="8.6" y="8.6" width="2.6" height="2.6" fill="#cdcdcd"/></svg>
<div class="a" style="left:19.5px;top:137.5px;width:0;height:0;border-left:2px solid transparent;border-bottom:2px solid #ccc;"></div>
<div class="a" style="left:38.5px;top:137.5px;width:0;height:0;border-left:2px solid transparent;border-bottom:2px solid #ccc;"></div>
<svg class="a" style="left:7.1px;top:143.3px" width="10.8" height="10.8" viewBox="0 0 12 12"><circle cx="4.6" cy="5" r="3.6" fill="none" stroke="#cdcdcd" stroke-width="1"/><circle cx="7.4" cy="6" r="3.2" fill="#aaa" stroke="#cdcdcd" stroke-width="0.9"/><path d="M7,7 L7,11.6 L8.2,10.6 L9,12 L9.8,11.6 L9,10.2 L10.4,10 Z" fill="#fff"/></svg>
<svg class="a" style="left:26.1px;top:143.3px" width="10.8" height="10.8" viewBox="0 0 12 12"><path d="M1,10.5 L1,3 L6,1 L11,4 L11,10.5 M1,10.5 L6,8.5 L11,10.5 M6,1 L6,8.5 M1,6.7 L6,4.8 L11,7.2 M3.5,2 L3.5,9.5 M8.5,2.5 L8.5,9.5" fill="none" stroke="#cdcdcd" stroke-width="0.8"/></svg>
<div class="a" style="left:19.5px;top:153.2px;width:0;height:0;border-left:2px solid transparent;border-bottom:2px solid #ccc;"></div>
<div class="a" style="left:38.5px;top:153.2px;width:0;height:0;border-left:2px solid transparent;border-bottom:2px solid #ccc;"></div>
<svg class="a" style="left:7.1px;top:158.6px" width="10.8" height="10.8" viewBox="0 0 12 12"><rect x="1" y="2" width="10" height="8" fill="#888" stroke="#cdcdcd" stroke-width="0.9"/><path d="M1,6 C4,4 8,8 11,6 M6,2 C4.5,5 7.5,7 6,10" fill="none" stroke="#fff" stroke-width="0.8"/></svg>
<svg class="a" style="left:26.1px;top:158.6px" width="10.8" height="10.8" viewBox="0 0 12 12"><defs><linearGradient id="tg" x1="0" x2="1"><stop offset="0" stop-color="#3a3a3a"/><stop offset="1" stop-color="#eee"/></linearGradient></defs><rect x="1" y="2" width="10" height="8" fill="url(#tg)" stroke="#cdcdcd" stroke-width="0.9"/></svg>
<div class="a" style="left:19.5px;top:168.5px;width:0;height:0;border-left:2px solid transparent;border-bottom:2px solid #ccc;"></div>
<svg class="a" style="left:7.1px;top:174.1px" width="10.8" height="10.8" viewBox="0 0 12 12"><path d="M10.8,1.2 C11.8,2.2 11.4,3.4 10.2,4.2 L8.8,5.4 L6.6,3.2 L7.8,1.8 C8.6,0.6 9.8,0.2 10.8,1.2 Z" fill="#cdcdcd"/><path d="M7,4 L8,5 L3,10 L1,11 L2,9 Z" fill="#cdcdcd"/></svg>
<svg class="a" style="left:26.1px;top:174.1px" width="10.8" height="10.8" viewBox="0 0 12 12"><rect x="1" y="1" width="5.5" height="5.5" fill="#aaa" stroke="#cdcdcd" stroke-width="0.8"/><rect x="3.5" y="3.5" width="5" height="5" fill="#888" stroke="#cdcdcd" stroke-width="0.8"/><circle cx="8.4" cy="8.4" r="2.8" fill="#777" stroke="#cdcdcd" stroke-width="1"/></svg>
<div class="a" style="left:19.5px;top:184.0px;width:0;height:0;border-left:2px solid transparent;border-bottom:2px solid #ccc;"></div>
<div class="a" style="left:38.5px;top:184.0px;width:0;height:0;border-left:2px solid transparent;border-bottom:2px solid #ccc;"></div>
<svg class="a" style="left:7.1px;top:190.6px" width="10.8" height="10.8" viewBox="0 0 12 12"><rect x="3" y="5" width="5.5" height="6.5" rx="1" fill="none" stroke="#cdcdcd" stroke-width="1"/><rect x="4.4" y="2.6" width="2.8" height="2.4" fill="#cdcdcd"/><circle cx="5.8" cy="8.2" r="1.6" fill="none" stroke="#cdcdcd" stroke-width="0.9"/><path d="M1,1.5 L2,1.5 M2,3.5 L3,3.5 M9,1.5 L10,1.5" stroke="#cdcdcd" stroke-width="0.9"/></svg>
<svg class="a" style="left:26.1px;top:190.6px" width="10.8" height="10.8" viewBox="0 0 12 12"><path d="M1,0.5 L1,11 L11.5,11" fill="none" stroke="#cdcdcd" stroke-width="0.9"/><rect x="2.6" y="5" width="2" height="5.4" fill="#cdcdcd"/><rect x="5.6" y="2" width="2" height="8.4" fill="#cdcdcd"/><rect x="8.6" y="6.4" width="2" height="4" fill="#cdcdcd"/></svg>
<div class="a" style="left:19.5px;top:200.5px;width:0;height:0;border-left:2px solid transparent;border-bottom:2px solid #ccc;"></div>
<div class="a" style="left:38.5px;top:200.5px;width:0;height:0;border-left:2px solid transparent;border-bottom:2px solid #ccc;"></div>
<svg class="a" style="left:7.1px;top:205.6px" width="10.8" height="10.8" viewBox="0 0 12 12"><path d="M3,0.5 L3,11.5 M9,0.5 L9,11.5 M0.5,3 L11.5,3 M0.5,9 L11.5,9" stroke="#cdcdcd" stroke-width="0.9"/><rect x="3" y="3" width="6" height="6" fill="#8a8a8a"/></svg>
<svg class="a" style="left:26.1px;top:205.6px" width="10.8" height="10.8" viewBox="0 0 12 12"><path d="M11,1 L5.4,6.2 L6.8,7.6 Z" fill="#cdcdcd"/><path d="M5,6.6 L6.4,8 L2,11 L1,10 Z" fill="#cdcdcd"/></svg>
<div class="a" style="left:19.5px;top:215.5px;width:0;height:0;border-left:2px solid transparent;border-bottom:2px solid #ccc;"></div>
<div class="a" style="left:38.5px;top:215.5px;width:0;height:0;border-left:2px solid transparent;border-bottom:2px solid #ccc;"></div>
<svg class="a" style="left:7.1px;top:221.1px" width="10.8" height="10.8" viewBox="0 0 12 12"><path d="M3.2,6.8 L3.2,2.6 C3.2,1.6 4.6,1.6 4.6,2.6 L4.6,1.6 C4.6,0.5 6.1,0.5 6.1,1.6 L6.1,2 C6.1,1 7.6,1 7.6,2 L7.6,3 C7.6,2.1 9,2.1 9,3.1 L9,8 C9,10.4 8,11.6 6,11.6 C4.2,11.6 3.4,10.8 2.4,9.2 L0.8,6.6 C0.4,5.8 1.4,5.2 2,6 Z" fill="#cdcdcd"/></svg>
<svg class="a" style="left:26.1px;top:221.1px" width="10.8" height="10.8" viewBox="0 0 12 12"><circle cx="5" cy="5" r="3.6" fill="#8f8f8f" stroke="#cdcdcd" stroke-width="1.3"/><path d="M7.6,7.6 L11,11" stroke="#cdcdcd" stroke-width="2"/></svg>
<div class="a" style="left:19.5px;top:231.0px;width:0;height:0;border-left:2px solid transparent;border-bottom:2px solid #ccc;"></div>
  <!-- fill / stroke -->
  <div class="a" style="left:15px;top:249.5px;width:20.5px;height:20.5px;background:#fff;border:0.5px solid #bbb;box-sizing:border-box;overflow:hidden;"><div class="a" style="left:-5px;top:8.2px;width:30px;height:3.2px;background:#a3202a;transform:rotate(-45deg);"></div><div class="a" style="left:5.7px;top:5.7px;width:8.2px;height:8.2px;background:#474747;"></div></div>
  <div class="a" style="left:3.5px;top:238px;width:20.5px;height:20.5px;background:#3aaa2c;border:1px solid #97d58b;box-sizing:border-box;"></div>
  <svg class="a" style="left:29.5px;top:238px" width="7" height="6.3" viewBox="0 0 10 9"><path d="M2,2 C6,1.5 7.5,3 7.5,7" fill="none" stroke="#ddd" stroke-width="1"/><path d="M0.5,2 L3,0.3 L3,3.7 Z M7.5,8.8 L5.8,6.4 L9.2,6.4 Z" fill="#ddd"/></svg>
  <svg class="a" style="left:3px;top:262px" width="8" height="8" viewBox="0 0 8 8"><rect x="2.6" y="2.6" width="4.6" height="4.6" fill="#fff" stroke="#111" stroke-width="0.8"/><rect x="0.5" y="0.5" width="4.6" height="4.6" fill="#111" stroke="#fff" stroke-width="0.8"/></svg>
  <!-- colour mode buttons -->
  <div class="a" style="left:4px;top:275px;width:12px;height:12px;background:#2d2d2d;"></div>
  <div class="a" style="left:6px;top:277px;width:8px;height:8px;background:#3c9b38;border:0.5px solid #9c9;box-sizing:border-box;"></div>
  <div class="a" style="left:18px;top:277px;width:8px;height:8px;background:linear-gradient(90deg,#e8f4ee,#5ea57e);border:0.5px solid #ddd;box-sizing:border-box;"></div>
  <div class="a" style="left:29.5px;top:277px;width:8px;height:8px;background:#fff;overflow:hidden;"><div class="a" style="left:-2px;top:3px;width:12px;height:2px;background:#c0202a;transform:rotate(-45deg);"></div></div>
  <!-- draw modes -->
  <div class="a" style="left:4px;top:289.5px;width:12px;height:11px;background:#2d2d2d;"></div>
  <svg class="a" style="left:5px;top:290px" width="34" height="10" viewBox="0 0 34 10"><g fill="#bbb" stroke="#e0e0e0" stroke-width="0.7"><circle cx="4" cy="4" r="2.6" fill="#777"/><rect x="4" y="4" width="4.6" height="4.6"/><rect x="13.4" y="4" width="4.6" height="4.6" fill="#777"/><circle cx="17" cy="4.6" r="2.8" fill="#aaa"/><circle cx="28" cy="5" r="3.4" fill="#777"/><circle cx="28" cy="5" r="1.3" fill="#ddd"/></g></svg>
  <!-- screen mode -->
  <svg class="a" style="left:13px;top:306px" width="16" height="12" viewBox="0 0 16 12"><rect x="4" y="1" width="11" height="7.5" fill="#777" stroke="#ddd" stroke-width="0.8"/><rect x="1" y="3.5" width="11" height="7.5" fill="#999" stroke="#e6e6e6" stroke-width="0.8"/><rect x="1" y="3.5" width="11" height="1.8" fill="#e6e6e6"/></svg>
</div>

<!-- ================= STATUS BAR ================= -->
<div id="status" class="a">
  <div class="a" style="left:0;top:10px;width:917px;height:2px;background:#2e2e2e;"></div>
  <svg class="a" style="left:6px;top:2px" width="13" height="8" viewBox="0 0 13 8"><rect x="0.5" y="0.5" width="8" height="6.4" fill="none" stroke="#666" stroke-width="0.8"/><rect x="4.5" y="2" width="8" height="5.5" fill="#5a5a5a" stroke="#666" stroke-width="0.8"/></svg>
  <svg class="a" style="left:24px;top:1.5px" width="10" height="9" viewBox="0 0 10 9"><path d="M4,2 L1,2 L1,8 L8,8 L8,6" fill="none" stroke="#e0e0e0" stroke-width="1.1"/><path d="M3.5,6 C3.5,3.4 5,2.6 6.6,2.6 L6.6,0.6 L9.6,3.3 L6.6,6 L6.6,4.2 C5.4,4.2 4.4,4.6 3.5,6 Z" fill="#e6e6e6"/></svg>
  <div class="a" style="left:40.5px;top:2px;width:26px;height:8px;background:#cdcdcd;color:#111;font-size:7.5px;line-height:8.5px;letter-spacing:0.1px;padding-left:1px;box-sizing:border-box;">1434.6</div>
  <div class="a" style="left:68px;top:2px;width:8px;height:8px;background:#5c5c5c;"><i class="a" style="left:1.5px;top:2.5px;border:2.5px solid transparent;border-top:3px solid #f0f0f0;border-bottom:0;"></i></div>
  <div class="t" style="left:82px;top:2px;font-size:5.5px;color:#666;letter-spacing:4px;">|◀ ◀</div>
  <div class="a" style="left:103px;top:2px;width:26px;height:8px;background:#9b9b9b;color:#111;font-size:7.5px;line-height:8.5px;padding-left:1px;box-sizing:border-box;">1</div>
  <div class="a" style="left:131px;top:2px;width:8px;height:8px;background:#5c5c5c;"><i class="a" style="left:1.5px;top:2.5px;border:2.5px solid transparent;border-top:3px solid #f0f0f0;border-bottom:0;"></i></div>
  <div class="t" style="left:143px;top:2px;font-size:5.5px;color:#666;letter-spacing:4px;">▶ ▶|</div>
  <div class="t" style="left:221px;top:2.5px;font-size:7.5px;color:#e0e0e0;">选择</div>
  <div class="a" style="left:294px;top:3px;border:3px solid transparent;border-left:4px solid #e8e8e8;border-right:0;"></div>
  <div class="a" style="left:304px;top:0;width:613px;height:12px;background:#2f2f2f;"></div>
  <div class="a" style="left:305px;top:3px;border:3px solid transparent;border-right:4px solid #e8e8e8;border-left:0;"></div>
  <div class="a" style="left:611px;top:0.5px;width:10px;height:9.5px;background:#8c8c8c;"></div>
</div>

<div id="vscroll" class="a">
  <div class="a" style="left:1.5px;top:230px;width:9px;height:10px;background:#8c8c8c;"></div>
</div>

<!-- ================= RIGHT DOCK ================= -->
<div id="dock" class="a">
    <!-- dock header (positions relative to dock: left 972, top 19) -->
  <div class="a" style="left:-5px;top:2px;width:33px;height:9px;background:#2f2f2f;"></div>
  <div class="t" style="left:2px;top:4px;font-size:5px;color:#e0e0e0;letter-spacing:-1.2px;">◀◀</div>
  <div class="t" style="left:12px;top:2.5px;font-size:8px;color:#e6e6e6;">×</div>
  <div class="a" style="left:-5px;top:11px;width:33px;height:40px;background:#454545;"></div>
  <div class="a" style="left:-4px;top:13px;width:32px;height:1px;background:#333;"></div>
  <!-- colour (active) -->
  <div class="a" style="left:-3px;top:18px;width:22px;height:17.5px;background:#2c2c2c;border-radius:1.5px;border:0.7px solid #5e5e5e;box-sizing:border-box;"></div>
  <svg class="a" style="left:0;top:20px" width="16" height="14" viewBox="0 0 16 14"><path d="M8,1.5 C12.5,1.5 15,4 15,7 C15,10.4 12,12.4 8.4,12.4 C6.4,12.4 6.8,10.6 5.4,10.2 C3.6,9.8 1,9.8 1,7 C1,4 3.8,1.5 8,1.5 Z" fill="#e2e2e2"/><g fill="#2a2a2a"><circle cx="4.4" cy="6.2" r="1.3"/><circle cx="7.4" cy="4.2" r="1.3"/><circle cx="11" cy="4.8" r="1.3"/><circle cx="12.2" cy="8.2" r="1.3"/></g></svg>
  <!-- colour guide -->
  <svg class="a" style="left:5px;top:36px" width="15" height="14" viewBox="0 0 15 14"><path d="M11,2.5 A5.2,5.2 0 1 0 11,11.5" fill="none" stroke="#dcdcdc" stroke-width="1.4"/><circle cx="6.6" cy="7" r="2" fill="#dcdcdc"/><path d="M8,6 L12.6,1.6 M8,8 L12.6,12" stroke="#dcdcdc" stroke-width="1"/><circle cx="12.8" cy="1.8" r="1.4" fill="#eee"/><circle cx="12.8" cy="12" r="1.4" fill="#eee"/></svg>
  <div class="sep" style="top:51px;left:-4px;width:32px;"></div>
  <div class="grip" style="top:55.5px;"></div>
  <!-- swatches -->
  <svg class="a" style="left:6px;top:63px" width="14" height="10" viewBox="0 0 14 10"><rect x="0.5" y="0.5" width="13" height="9" fill="#2e2e2e" stroke="#dcdcdc" stroke-width="1"/><g fill="#e0e0e0"><rect x="2" y="2" width="2.6" height="2.4"/><rect x="5.7" y="2" width="2.6" height="2.4"/><rect x="9.4" y="2" width="2.6" height="2.4"/><rect x="2" y="5.6" width="2.6" height="2.4"/><rect x="5.7" y="5.6" width="2.6" height="2.4" fill="#999"/><rect x="9.4" y="5.6" width="2.6" height="2.4"/></g></svg>
  <!-- brushes -->
  <svg class="a" style="left:6px;top:79px" width="14" height="14" viewBox="0 0 14 14"><path d="M4,1 L5,5 M7,0.5 L7,5 M10.4,1 L9,5" stroke="#e0e0e0" stroke-width="1.6"/><path d="M3.6,5.4 L10.4,5.4 L9.6,13 L4.4,13 Z" fill="#dcdcdc"/><rect x="4.2" y="8" width="5.6" height="1.2" fill="#777"/></svg>
  <!-- symbols -->
  <svg class="a" style="left:6px;top:98px" width="14" height="12" viewBox="0 0 14 12"><circle cx="7" cy="3.4" r="2.8" fill="#dcdcdc"/><circle cx="3.6" cy="6.8" r="2.8" fill="#dcdcdc"/><circle cx="10.4" cy="6.8" r="2.8" fill="#dcdcdc"/><path d="M7,6 L5,11.5 L9,11.5 Z" fill="#dcdcdc"/></svg>
  <div class="sep" style="top:113px;"></div>
  <div class="grip" style="top:116.5px;"></div>
  <!-- stroke -->
  <svg class="a" style="left:6px;top:124px" width="14" height="9" viewBox="0 0 14 9"><path d="M0.5,1 L13.5,1" stroke="#e0e0e0" stroke-width="1.8"/><path d="M0.5,4.4 L13.5,4.4" stroke="#e0e0e0" stroke-width="1.3"/><path d="M0.5,7.6 L13.5,7.6" stroke="#e0e0e0" stroke-width="0.9"/></svg>
  <!-- gradient -->
  <svg class="a" style="left:6px;top:142px" width="14" height="10" viewBox="0 0 14 10"><defs><linearGradient id="dg" x1="0" x2="1"><stop offset="0" stop-color="#f2f2f2"/><stop offset="1" stop-color="#3a3a3a"/></linearGradient></defs><rect x="0.5" y="0.5" width="13" height="9" fill="url(#dg)" stroke="#dcdcdc" stroke-width="1"/></svg>
  <!-- transparency (active) -->
  <div class="a" style="left:3px;top:155.5px;width:19px;height:17px;background:#2c2c2c;border-radius:1.5px;border:0.7px solid #5e5e5e;box-sizing:border-box;"></div>
  <svg class="a" style="left:5px;top:157px" width="15" height="14" viewBox="0 0 15 14"><circle cx="6" cy="6" r="4.6" fill="#bdbdbd" stroke="#e6e6e6" stroke-width="1"/><circle cx="9" cy="8.4" r="4.2" fill="#8a8a8a" fill-opacity="0.85" stroke="#e6e6e6" stroke-width="1"/><circle cx="9" cy="8.4" r="1.8" fill="#dadada"/></svg>
  <div class="sep" style="top:175.5px;"></div>
  <div class="grip" style="top:178.5px;"></div>
  <!-- appearance -->
  <svg class="a" style="left:6px;top:184px" width="14" height="14" viewBox="0 0 14 14"><circle cx="7" cy="7" r="5.6" fill="none" stroke="#dcdcdc" stroke-width="1.2" stroke-dasharray="1.6 1"/><circle cx="7" cy="7" r="3.6" fill="#dcdcdc"/><circle cx="7" cy="7" r="1.6" fill="#8a8a8a"/></svg>
  <!-- graphic styles -->
  <svg class="a" style="left:5px;top:202px" width="15" height="13" viewBox="0 0 15 13"><rect x="4.6" y="0.6" width="9.6" height="9.6" fill="none" stroke="#dcdcdc" stroke-width="1.1"/><rect x="0.8" y="5.6" width="6.4" height="6.4" rx="1.6" fill="#454545" stroke="#dcdcdc" stroke-width="1.1"/><circle cx="4" cy="8.8" r="1.4" fill="#dcdcdc"/></svg>
  <div class="sep" style="top:217.5px;"></div>
  <div class="grip" style="top:220.5px;"></div>
  <!-- layers -->
  <svg class="a" style="left:5px;top:226px" width="16" height="15" viewBox="0 0 16 15"><path d="M8,5.6 L15,9.4 L8,13.4 L1,9.4 Z" fill="none" stroke="#e2e2e2" stroke-width="1.2"/><path d="M8,0.8 L15,4.8 L8,8.8 L1,4.8 Z" fill="#e6e6e6"/></svg>
  <!-- artboards -->
  <svg class="a" style="left:5px;top:245px" width="16" height="14" viewBox="0 0 16 14"><rect x="0.7" y="0.7" width="9" height="8.4" fill="none" stroke="#dcdcdc" stroke-width="1.1"/><rect x="5.4" y="4.6" width="9.6" height="8.6" fill="#454545" stroke="#dcdcdc" stroke-width="1.1"/></svg>
  <div class="sep" style="top:263px;"></div>
  <div class="a" style="left:26.6px;top:11px;width:1.4px;height:484px;background:#2d2d2d;"></div>
  <div class="a" style="left:0;top:263px;width:1.6px;height:232px;background:#4b4b4b;"></div>

</div>

<!-- ================= COLOUR PANEL ================= -->
<div class="pn" id="colorpanel" style="left:815px;top:30px;width:152px;height:123px;background:#484848;">
  <div class="a" style="left:0;top:0;width:152px;height:12px;background:#2e2e2e;"></div>
  <div class="a" style="left:0;top:0;width:152px;height:1px;background:#262626;"></div>
  <div class="a" style="left:1px;top:1px;width:28px;height:11px;background:#484848;"></div>
  <svg class="a" style="left:2.5px;top:3px" width="5" height="8" viewBox="0 0 5 8"><path d="M2.5,0.5 L4.6,3 L0.4,3 Z M2.5,7.5 L4.6,5 L0.4,5 Z" fill="#e6e6e6"/></svg>
  <div class="t" style="left:9px;top:3px;font-size:7.8px;color:#ececec;">颜色</div>
  <div class="t" style="left:126px;top:3.5px;font-size:5px;color:#e0e0e0;letter-spacing:-1.2px;">▶▶</div>
  <svg class="a" style="left:139px;top:3px" width="11" height="7" viewBox="0 0 11 7"><path d="M0.3,2 L2.9,2 L1.6,3.8 Z" fill="#e6e6e6"/><path d="M4,1 L10.5,1 M4,3.4 L10.5,3.4 M4,5.8 L10.5,5.8" stroke="#e6e6e6" stroke-width="1"/></svg>
  <!-- mini icons -->
  <svg class="a" style="left:5px;top:17px" width="7" height="7" viewBox="0 0 7 7"><circle cx="3.5" cy="3.5" r="2.8" fill="#1c1c1c" stroke="#e8e8e8" stroke-width="0.9"/><path d="M3.5,0.7 A2.8,2.8 0 0 1 6.3,3.5 L3.5,3.5 Z" fill="#eee"/></svg>
  <svg class="a" style="left:16px;top:16px" width="8" height="8" viewBox="0 0 8 8"><path d="M1.6,1.8 C5,1.4 6.2,2.6 6.2,6" fill="none" stroke="#ddd" stroke-width="0.9"/><path d="M0.2,1.8 L2.4,0.3 L2.4,3.3 Z M6.2,7.8 L4.8,5.6 L7.6,5.6 Z" fill="#ddd"/></svg>
  <!-- stroke then fill -->
  <div class="a" style="left:10px;top:33.5px;width:12px;height:12px;background:#fff;overflow:hidden;"><div class="a" style="left:-4px;top:4.5px;width:20px;height:2.6px;background:#b0202c;transform:rotate(-45deg);"></div><div class="a" style="left:3.5px;top:3.5px;width:5px;height:5px;background:#484848;"></div></div>
  <div class="a" style="left:4px;top:27.5px;width:12px;height:12px;background:#3aaa2c;border:1px solid #a5dc98;box-sizing:border-box;"></div>
  <!-- cube + web swatch -->
  <svg class="a" style="left:7px;top:55.5px" width="9" height="10" viewBox="0 0 9 10"><path d="M4.5,0.6 L8.4,2.6 L8.4,7.2 L4.5,9.4 L0.6,7.2 L0.6,2.6 Z" fill="#8c8c8c" stroke="#cfcfcf" stroke-width="0.7"/><path d="M0.6,2.6 L4.5,4.8 L8.4,2.6 M4.5,4.8 L4.5,9.4" fill="none" stroke="#cfcfcf" stroke-width="0.7"/></svg>
  <div class="a" style="left:19px;top:54.5px;width:8.5px;height:8.5px;background:#23a455;border:1px solid #b6e2c0;box-sizing:border-box;"></div>
  <!-- none / black / white -->
  <div class="a" style="left:4px;top:84px;width:8px;height:8px;background:#fff;overflow:hidden;"><div class="a" style="left:-2px;top:3px;width:12px;height:2px;background:#c0202a;transform:rotate(-45deg);"></div></div>
  <div class="a" style="left:12px;top:84px;width:8px;height:8px;background:#000;"></div>
  <div class="a" style="left:20.5px;top:84px;width:7.5px;height:8px;background:#fff;"></div>
  <!-- sliders -->
  <div class="t" style="left:33px;top:20px;font-size:7.2px;font-weight:bold;color:#d2d2d2;">C</div>
  <div class="t" style="left:33px;top:36px;font-size:7.2px;font-weight:bold;color:#d2d2d2;">M</div>
  <div class="t" style="left:33.5px;top:52px;font-size:7.2px;font-weight:bold;color:#d2d2d2;">Y</div>
  <div class="t" style="left:33.5px;top:67.5px;font-size:7.2px;font-weight:bold;color:#d2d2d2;">K</div>
  <div class="a" style="left:45px;top:21.5px;width:64px;height:4px;background:linear-gradient(90deg,#f4ee4a,#c6d84a 40%,#3fa63c 100%);"></div>
  <div class="a" style="left:45px;top:37.5px;width:64px;height:3.5px;background:linear-gradient(90deg,#3fa63c,#4a7a2c 45%,#4a2014 100%);"></div>
  <div class="a" style="left:45px;top:53.5px;width:64px;height:3.5px;background:linear-gradient(90deg,#47a9d4,#45a9a0 50%,#3fa63c 100%);"></div>
  <div class="a" style="left:45px;top:69px;width:64px;height:3.5px;background:linear-gradient(90deg,#3fa63c,#1f5a1e 55%,#000 100%);"></div>
  <div class="a" style="left:89px;top:25.5px;border:3px solid transparent;border-bottom:4px solid #e8e8e8;border-top:0;"></div>
  <div class="a" style="left:41.5px;top:41px;border:3px solid transparent;border-bottom:4px solid #e8e8e8;border-top:0;"></div>
  <div class="a" style="left:106px;top:57px;border:3px solid transparent;border-bottom:4px solid #e8e8e8;border-top:0;"></div>
  <div class="a" style="left:41.5px;top:72.5px;border:3px solid transparent;border-bottom:4px solid #e8e8e8;border-top:0;"></div>
  <div class="a" style="left:113px;top:18.5px;width:20.5px;height:10.5px;background:#bcbcbc;color:#000;-webkit-text-stroke:0.25px #000;font-size:7.5px;line-height:10.5px;padding-left:1.5px;box-sizing:border-box;overflow:hidden;">79.66</div>
  <div class="a" style="left:113px;top:34px;width:20.5px;height:10.5px;background:#bcbcbc;color:#000;-webkit-text-stroke:0.25px #000;font-size:7.5px;line-height:10.5px;padding-left:1.5px;box-sizing:border-box;overflow:hidden;">0.11</div>
  <div class="a" style="left:113px;top:50px;width:20.5px;height:10.5px;background:#bcbcbc;color:#000;-webkit-text-stroke:0.25px #000;font-size:7.5px;line-height:10.5px;padding-left:1.5px;box-sizing:border-box;overflow:hidden;">99.98</div>
  <div class="a" style="left:113px;top:65.5px;width:20.5px;height:10.5px;background:#b0b0b0;color:#000;-webkit-text-stroke:0.25px #000;font-size:7.5px;line-height:10.5px;padding-left:1.5px;box-sizing:border-box;overflow:hidden;">0</div>
  <div class="t" style="left:135px;top:21px;font-size:7.5px;color:#e0e0e0;">%</div>
  <div class="t" style="left:135px;top:36.5px;font-size:7.5px;color:#e0e0e0;">%</div>
  <div class="t" style="left:135px;top:52.5px;font-size:7.5px;color:#e0e0e0;">%</div>
  <div class="t" style="left:135px;top:68px;font-size:7.5px;color:#e0e0e0;">%</div>
  <!-- spectrum strip -->
  <div class="a" style="left:4px;top:98.7px;width:136px;height:2.8px;background:linear-gradient(90deg,#e8b0b4,#f4e6e6 20%,#fff 60%,#fff);"></div>
  <div class="a" style="left:4px;top:101px;width:6px;height:11.5px;background:linear-gradient(180deg,#e02020,#a01010);"></div>
</div>

<!-- ================= TRANSPARENCY PANEL ================= -->
<div class="pn" id="transpanel" style="left:825px;top:131px;width:147px;height:80.5px;background:#484848;">
  <div class="a" style="left:0;top:0;width:147px;height:13.5px;background:#2e2e2e;"></div>
  <div class="a" style="left:0;top:0;width:147px;height:1.5px;background:#222;"></div>
  <div class="a" style="left:1px;top:2px;width:48px;height:11.5px;background:#3a3a3a;"></div>
  <div class="t" style="left:6.5px;top:5px;font-size:7.4px;color:#8a8a8a;">描边</div>
  <div class="t" style="left:29px;top:5px;font-size:7.4px;color:#8a8a8a;">渐变</div>
  <div class="a" style="left:49px;top:2px;width:35px;height:11.5px;background:#484848;"></div>
  <svg class="a" style="left:51.5px;top:5px" width="4.4" height="7" viewBox="0 0 5 8"><path d="M2.5,0.5 L4.6,3 L0.4,3 Z M2.5,7.5 L4.6,5 L0.4,5 Z" fill="#e6e6e6"/></svg>
  <div class="t" style="left:58px;top:5px;font-size:7.4px;color:#ececec;">透明度</div>
  <div class="t" style="left:121px;top:4.5px;font-size:5px;color:#e0e0e0;letter-spacing:-1.2px;">▶▶</div>
  <svg class="a" style="left:134px;top:4px" width="11" height="7" viewBox="0 0 11 7"><path d="M0.3,2 L2.9,2 L1.6,3.8 Z" fill="#e6e6e6"/><path d="M4,1 L10.5,1 M4,3.4 L10.5,3.4 M4,5.8 L10.5,5.8" stroke="#e6e6e6" stroke-width="1"/></svg>
  <!-- row: blend mode + opacity -->
  <div class="a" style="left:5px;top:19.5px;width:52px;height:10px;background:#5d5d5d;border:0.5px solid #6e6e6e;box-sizing:border-box;"></div>
  <div class="t" style="left:8px;top:20.7px;font-size:7.6px;color:#f0f0f0;">正常</div>
  <div class="a" style="left:50px;top:23.2px;border:2.5px solid transparent;border-top:3px solid #f0f0f0;border-bottom:0;"></div>
  <div class="t" style="left:62.5px;top:20.7px;font-size:7.8px;color:#e6e6e6;">不透明度:</div>
  <div class="a" style="left:101px;top:19.5px;width:32px;height:10px;background:#bcbcbc;color:#000;-webkit-text-stroke:0.25px #000;font-size:7.5px;line-height:10px;padding-left:1.5px;box-sizing:border-box;">79%</div>
  <div class="a" style="left:135px;top:19.5px;width:7px;height:10px;background:#5d5d5d;"><i class="a" style="left:2px;top:2.5px;border:2.5px solid transparent;border-left:3.5px solid #f0f0f0;border-right:0;"></i></div>
  <!-- thumbnail -->
  <div class="a" style="left:6px;top:42.5px;width:30.5px;height:30.5px;background:#fff;"></div>
  <svg class="a" style="left:6px;top:42.5px" width="30.5" height="30.5" viewBox="0 0 30.5 30.5"><g transform="translate(0.6,1.2) scale(0.385) translate(-459.6,-257.9)"><path d="M484.2,262.8A14.6,14.6 0 0 1 495.0,259.6A19.7,19.7 0 0 1 510.0,261.8L520.6,262.8A14.8,14.8 0 0 0 510.0,267.0A11.4,11.4 0 0 0 505.7,274.6L508.9,277.8A8.0,8.0 0 0 0 499.2,281.0A5.3,5.3 0 0 0 493.9,285.3A5.3,5.3 0 0 0 496.0,291.7A4.5,4.5 0 0 0 490.7,293.9A4.8,4.8 0 0 0 493.9,299.2A4.7,4.7 0 0 0 498.2,303.5A4.9,4.9 0 0 0 495.0,308.9A4.2,4.2 0 0 0 496.0,314.2A8.0,8.0 0 0 0 505.7,317.4A8.8,8.8 0 0 0 514.2,324.9A16.9,16.9 0 0 0 527.0,327.0L533.5,328.0A36.1,36.1 0 0 1 505.7,327.5A19.6,19.6 0 0 1 490.7,326.0A6.5,6.5 0 0 1 484.2,320.7A8.5,8.5 0 0 1 473.5,318.5A6.5,6.5 0 0 1 468.2,312.0A6.0,6.0 0 0 1 470.3,304.6A5.4,5.4 0 0 1 466.0,299.2A6.0,6.0 0 0 1 470.3,292.8A6.1,6.1 0 0 1 472.5,285.3A5.9,5.9 0 0 1 471.4,277.8A6.4,6.4 0 0 1 474.6,270.3A4.7,4.7 0 0 1 478.9,266.0L484.2,262.8Z" fill="#3fa72e"/></g></svg>
  <div class="a" style="left:36.5px;top:42.5px;width:8px;height:30.5px;background:#4f4f4f;"></div>
  <div class="a" style="left:54px;top:42px;width:32px;height:32px;border:1px solid #6e6e6e;box-sizing:border-box;background:#494949;"></div>
  <svg class="a" style="left:61.5px;top:50px" width="16" height="16" viewBox="0 0 16 16"><circle cx="8" cy="8" r="6.2" fill="none" stroke="#b8b8b8" stroke-width="1.7"/><path d="M3.7,3.9 L12.3,12.1" stroke="#b8b8b8" stroke-width="1.7"/></svg>
  <div class="a" style="left:91.5px;top:40px;width:43px;height:12px;background:#5e5e5e;border:0.5px solid #777;box-sizing:border-box;border-radius:1px;"></div>
  <div class="t" style="left:98px;top:42.3px;font-size:7.6px;color:#f2f2f2;">制作蒙版</div>
  <div class="a" style="left:92px;top:57px;width:5.5px;height:5.5px;border:0.5px solid #606060;box-sizing:border-box;background:#454545;"></div>
  <div class="t" style="left:101.5px;top:56.5px;font-size:7.5px;color:#7c7c7c;">剪切</div>
  <div class="a" style="left:92px;top:69px;width:5.5px;height:5.5px;border:0.5px solid #606060;box-sizing:border-box;background:#454545;"></div>
  <div class="t" style="left:101.5px;top:68.5px;font-size:7.5px;color:#7c7c7c;">反相蒙版</div>
</div>


<!-- ================= DESKTOP WIDGET (bottom right) ================= -->
<div class="a" style="left:868px;top:497px;width:93px;height:17px;background:linear-gradient(90deg,rgba(240,240,240,0),#ececec 12%,#f2f2f2 100%);"></div>
<div class="a" style="left:875px;top:496.5px;width:31.5px;height:32px;border-radius:2px 2px 16px 16px / 2px 2px 26px 26px;background:#e4f3e8;"></div>
<div class="a" style="left:876.5px;top:497.5px;width:28.5px;height:28px;border-radius:1px 1px 14px 14px / 1px 1px 24px 24px;background:linear-gradient(180deg,#118548 0%,#10914b 35%,#2cc05c 55%,#48d468 70%);"></div>
<div class="t" style="left:880.5px;top:497.5px;font-size:9.5px;color:#fff;letter-spacing:-0.2px;">29%</div>
<div class="t" style="left:909px;top:499px;font-size:5px;color:#9a9a9a;line-height:6px;">↑<br>↓</div>
<div class="t" style="left:926px;top:497.5px;font-size:4px;color:#999;letter-spacing:0.3px;">• • • •</div>
<div class="t" style="left:925px;top:503.5px;font-size:7px;color:#444;letter-spacing:-0.2px;">0K/s</div>
<div class="a" style="left:940px;top:498px;width:11px;height:11px;border-radius:50%;background:radial-gradient(circle at 45% 55%,#5aa0f0,#2a62c8);"></div>
<div class="t" style="left:942.5px;top:499.5px;font-size:8px;color:#fff;font-weight:bold;">+</div>
<div class="a" style="left:947px;top:496.5px;width:4.5px;height:4.5px;border-radius:50%;background:#e02a3a;"></div>
<div class="a" style="left:952px;top:483px;width:24px;height:15px;background:linear-gradient(90deg,rgba(255,255,255,0),#f4f4f4 35%,#fdfdfd);"></div>
<svg class="a" style="left:963px;top:485px" width="11" height="11" viewBox="0 0 11 11"><path d="M7.6,0.8 C6,0.6 4.6,2 5.2,3.8 L1,8.2 C0.4,8.8 0.4,9.6 1,10.2 C1.6,10.8 2.4,10.6 3,10 L7,5.8 C8.8,6.4 10.4,5 10.2,3.2 L8.6,4.6 L7,4 L6.4,2.4 Z" fill="#333"/></svg>


</div>
</body>
</html>
